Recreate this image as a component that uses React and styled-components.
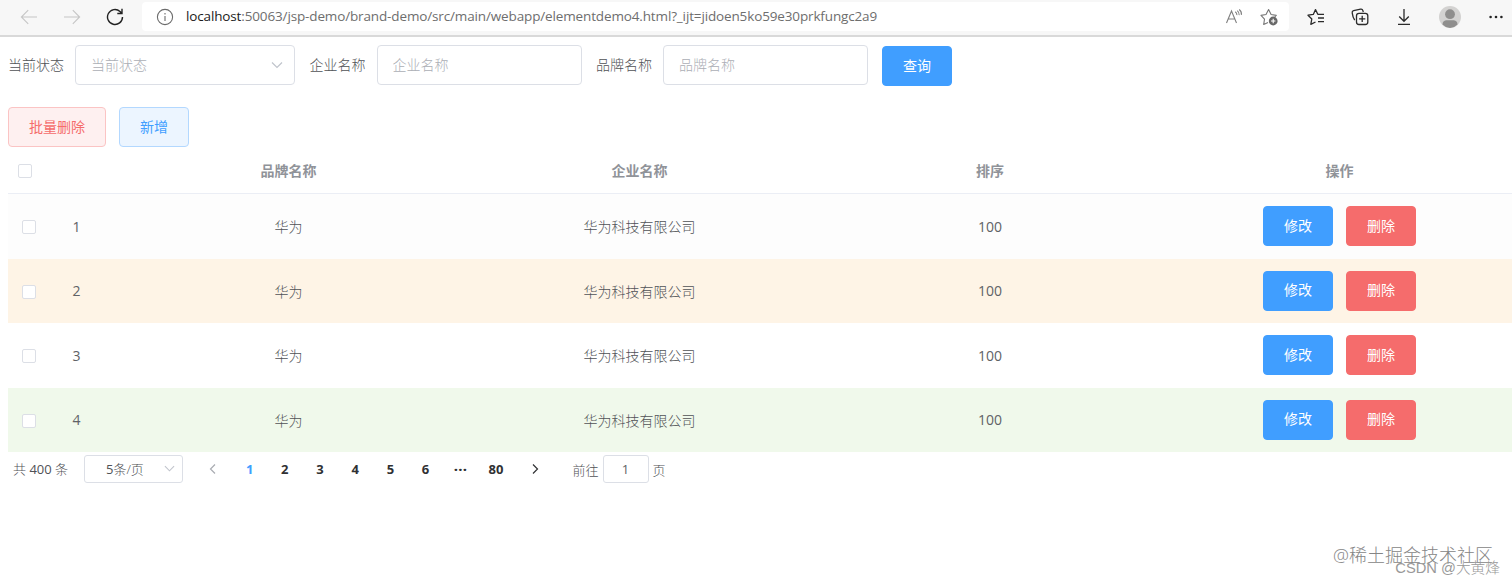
import React, { useState } from 'react'
import styled, { createGlobalStyle } from 'styled-components'

const brands = [
    { id: 1, brandName: '华为', companyName: '华为科技有限公司', ordered: 100, tone: '#fdfdfd' },
    { id: 2, brandName: '华为', companyName: '华为科技有限公司', ordered: 100, tone: '#fef4e6' },
    { id: 3, brandName: '华为', companyName: '华为科技有限公司', ordered: 100, tone: '#fff' },
    { id: 4, brandName: '华为', companyName: '华为科技有限公司', ordered: 100, tone: '#f0f9eb' },
]

const pages = ['1', '2', '3', '4', '5', '6', '···', '80']

const Chevron = ({ d, size = 12, color = '#c0c4cc' }) => (
    <svg width={size} height={size} viewBox="0 0 12 12" fill="none" stroke={color} strokeWidth="1.2">
        <path d={d} />
    </svg>
)

function BrowserBar() {
    return (
        <Browser>
            <NavIcons>
                <svg width="18" height="18" viewBox="0 0 18 18" fill="none" stroke="#c6c6c6" strokeWidth="1.1">
                    <path d="M17 9H1.500M8.200 2.200 1.400 9l6.800 6.800" />
                </svg>
                <svg width="18" height="18" viewBox="0 0 18 18" fill="none" stroke="#c6c6c6" strokeWidth="1.1">
                    <path d="M1 9h15.500M9.800 2.200 16.600 9l-6.800 6.800" />
                </svg>
                <svg width="18" height="18" viewBox="0 0 18 18" fill="none" stroke="#222" strokeWidth="1.4">
                    <path d="M16.500 9A7.500 7.500 0 1 1 14 3.400L15.500 5M16 .8V5.500H11.300" />
                </svg>
            </NavIcons>
            <Address>
                <svg width="18" height="18" viewBox="0 0 18 18" fill="none" stroke="#6b6b6b" strokeWidth="1.1">
                    <circle cx="9" cy="9" r="7.600" />
                    <path d="M9 8v5M9 5v1.500" />
                </svg>
                <Url>
                    <b>localhost</b>:50063/jsp-demo/brand-demo/src/main/webapp/elementdemo4.html?_ijt=jidoen5ko59e30prkfungc2a9
                </Url>
                <svg width="18" height="18" viewBox="0 0 18 18" fill="none" stroke="#808080" strokeWidth="1.1">
                    <path d="M1.500 15 6.500 3l5 12M3.300 11h6.400M10.200 3.700c1.200.8 1.800 2 1.700 3.400M12.200 2.600c1.500 1.100 2.200 2.600 2 4.500M14.200 1.500c1.800 1.400 2.500 3.300 2.200 5.400" />
                </svg>
                <svg width="18" height="18" viewBox="0 0 18 18" fill="none" stroke="#777" strokeWidth="1.1">
                    <path d="M8 14.500 3.700 16.500 4.500 11.200 1 7.400l5-.9L8.600 1.500l2.500 5 5.200.9-1.500 1.400" strokeLinejoin="round" />
                    <circle cx="13.200" cy="13" r="4.400" fill="#686868" stroke="none" />
                    <path d="M13.200 10.800v4.400M11 13h4.400" stroke="#fff" />
                </svg>
            </Address>
            <Tools>
                <svg width="18" height="18" viewBox="0 0 18 18" fill="none" stroke="#2b2b2b" strokeWidth="1.300">
                    <path d="M8.500 14 3.800 16.300 4.800 11 1 7.200l5.300-.8L8.500 1.600l2.300 4.700h6.200M11 10h6M11 13.700h6" strokeLinejoin="round" />
                </svg>
                <svg width="18" height="18" viewBox="0 0 18 18" fill="none" stroke="#2b2b2b" strokeWidth="1.300">
                    <rect x="5.500" y="5.300" width="11.300" height="11.200" rx="2.500" />
                    <path d="M11.200 7.800v6.200M8.100 10.900h6.200M3.700 12.200C2.300 9.900 1.500 7.300 1.200 4.800c-.2-1.100.3-1.900 1.400-2.200l7-1.400c1.100-.2 2 .3 2.300 1.400l.4 1.400" />
                </svg>
                <svg width="18" height="18" viewBox="0 0 18 18" fill="none" stroke="#2b2b2b" strokeWidth="1.300">
                    <path d="M9 1v12M4.200 8.500 9 13.300l4.800-4.800M3 16.400h12" />
                </svg>
                <svg width="22" height="22" viewBox="0 0 22 22">
                    <circle cx="11" cy="11" r="11" fill="#d3d2d1" />
                    <circle cx="11" cy="8.200" r="4.900" fill="#8f8e8d" />
                    <path d="M3.500 18.500c0-3 2.300-4.300 4.300-4.300h6.400c2 0 4.300 1.300 4.300 4.300A11 11 0 0 1 11 22a11 11 0 0 1-7.500-3.500" fill="#8f8e8d" />
                </svg>
                <svg width="16" height="16" viewBox="0 0 16 16" fill="#222">
                    <circle cx="2.600" cy="8" r="1.300" />
                    <circle cx="8" cy="8" r="1.300" />
                    <circle cx="13.400" cy="8" r="1.300" />
                </svg>
            </Tools>
        </Browser>
    )
}

export default function App() {
    const [status] = useState('')
    const [companyName, setCompanyName] = useState('')
    const [brandName, setBrandName] = useState('')
    const [currentPage, setCurrentPage] = useState('1')

    return (
        <Page>
            <GlobalStyle />
            <BrowserBar />
            <SearchForm onSubmit={(e) => e.preventDefault()}>
                <Label>当前状态</Label>
                <Select>
                    {status || '当前状态'}
                    <Chevron d="M1 3.500 6 8.500l5-5" />
                </Select>
                <Label>企业名称</Label>
                <Input placeholder="企业名称" value={companyName} onChange={(e) => setCompanyName(e.target.value)} />
                <Label>品牌名称</Label>
                <Input placeholder="品牌名称" value={brandName} onChange={(e) => setBrandName(e.target.value)} />
                <SearchButton type="submit" $kind="primary">查询</SearchButton>
            </SearchForm>
            <Actions>
                <Button $kind="dangerPlain" $width="98px">批量删除</Button>
                <Button $kind="primaryPlain">新增</Button>
            </Actions>
            <Table>
                <HeadRow>
                    <CheckCell $head><Checkbox /></CheckCell>
                    <span />
                    <Cell>品牌名称</Cell>
                    <Cell>企业名称</Cell>
                    <Cell>排序</Cell>
                    <Cell>操作</Cell>
                </HeadRow>
                {brands.map((brand) => (
                    <Row key={brand.id} $tone={brand.tone}>
                        <CheckCell><Checkbox /></CheckCell>
                        <IndexCell>{brand.id}</IndexCell>
                        <Cell>{brand.brandName}</Cell>
                        <Cell>{brand.companyName}</Cell>
                        <NumberCell>{brand.ordered}</NumberCell>
                        <Cell>
                            <Button $kind="primary">修改</Button>
                            <Button $kind="danger">删除</Button>
                        </Cell>
                    </Row>
                ))}
            </Table>
            <Pagination>
                <Total>共 <b>400</b> 条</Total>
                <PageSize>
                    <span><b>5</b>条/页</span>
                    <Chevron size={11} d="M1 3.500 6 8.500l5-5" />
                </PageSize>
                <Arrow>
                    <Chevron d="M8 1.500 3.500 6 8 10.500" color="#a9acb2" />
                </Arrow>
                {pages.map((page) => (
                    <Pager key={page} $active={page === currentPage} $dots={page === '···'} onClick={() => setCurrentPage(page)}>
                        {page}
                    </Pager>
                ))}
                <Arrow $next>
                    <Chevron d="M4 1.500 8.500 6 4 10.500" color="#303133" />
                </Arrow>
                <Jump>
                    前往
                    <JumpInput defaultValue="1" />
                    页
                </Jump>
            </Pagination>
            <Watermark>@稀土掘金技术社区</Watermark>
            <Credit>CSDN @大黄烽</Credit>
        </Page>
    )
}

const GlobalStyle = createGlobalStyle`
    * {
        box-sizing: border-box;
    }
    body {
        margin: 0;
        background: #fff;
    }
    body, button, input {
        font-family: 'Open Sans', 'Noto Sans CJK SC', sans-serif;
    }
    svg {
        display: block;
        flex: none;
    }
`

const Page = styled.div`
    position: relative;
    height: 584px;
    overflow: hidden;
    color: #505256;
    font-size: 14px;
    font-weight: 300;
`

const Browser = styled.header`
    display: flex;
    height: 37px;
    padding-bottom: 4px;
    background: #f7f7f7;
    border-bottom: 2px solid #d9d9d9;
`

const NavIcons = styled.div`
    display: flex;
    align-items: center;
    gap: 25px;
    width: 142px;
    padding: 2px 0 0 20px;
`

const Address = styled.div`
    display: flex;
    align-items: center;
    width: 1147px;
    margin-top: 2px;
    padding: 0 11px 0 14px;
    background: #fff;
    border-radius: 4px;
    > :nth-child(3) {
        margin: 0 17px 0 auto;
    }
`

const Url = styled.span`
    margin: -2px 0 0 12px;
    color: #6e6e6e;
    font-size: 13.5px;
    font-weight: 400;
    letter-spacing: -0.14px;
    line-height: 20px;
    white-space: nowrap;
    b {
        color: #1b1b1b;
        font-weight: 400;
    }
`

const Tools = styled.div`
    display: flex;
    align-items: center;
    gap: 26px;
    padding: 2px 0 0 18px;
    > :nth-child(4) {
        margin-right: 1px;
    }
`

const SearchForm = styled.form`
    display: flex;
    align-items: center;
    height: 40px;
    margin: 8px 0 0 8px;
`

const Label = styled.label`
    width: 56px;
    margin-right: 11px;
    line-height: 40px;
    white-space: nowrap;
`

const Select = styled.div`
    display: flex;
    align-items: center;
    justify-content: space-between;
    width: 220px;
    height: 40px;
    margin-right: 14.5px;
    padding: 0 11px 2px 15px;
    border: 1px solid #dcdfe6;
    border-radius: 4px;
    color: #abaeb5;
    svg {
        margin-top: 2px;
    }
`

const Input = styled.input`
    width: 205px;
    height: 40px;
    margin-right: 14.5px;
    padding: 0 15px 2px;
    border: 1px solid #dcdfe6;
    border-radius: 4px;
    outline: none;
    font-size: 14px;
    font-weight: 300;
    &::placeholder {
        color: #abaeb5;
    }
`

const kinds = {
    primary: ['#409eff', '#409eff', '#fff'],
    danger: ['#f56c6c', '#f56c6c', '#fff'],
    primaryPlain: ['#ecf5ff', '#b3d8ff', '#409eff'],
    dangerPlain: ['#fef0f0', '#fbc4c4', '#f56c6c'],
}

const Button = styled.button`
    flex: none;
    width: ${({ $width }) => $width || '70px'};
    height: 40px;
    padding: 0 0 3px;
    background: ${({ $kind }) => kinds[$kind][0]};
    border: 1px solid ${({ $kind }) => kinds[$kind][1]};
    border-radius: 4px;
    color: ${({ $kind }) => kinds[$kind][2]};
    font-size: 14px;
    font-weight: 400;
    cursor: pointer;
`

const SearchButton = styled(Button)`
    margin: 2px 0 0 -0.5px;
`

const Actions = styled.div`
    display: flex;
    gap: 13px;
    margin: 22px 0 0 8px;
`

const Table = styled.div`
    width: 1507px;
    margin-left: 8px;
`

const Row = styled.div`
    display: grid;
    grid-template-columns: 54px 51px 351px 351px 350px 349px;
    align-items: center;
    height: 64.5px;
    background: ${({ $tone }) => $tone};
`

const HeadRow = styled(Row)`
    height: 47px;
    padding-bottom: 1px;
    border-bottom: 1px solid #ebeef5;
    color: #909399;
    font-weight: 700;
`

const Cell = styled.div`
    display: flex;
    align-items: center;
    justify-content: center;
    gap: 13px;
`

const NumberCell = styled(Cell)`
    font-weight: 400;
    color: #606266;
`

const IndexCell = styled.div`
    padding-left: 10.5px;
    font-weight: 400;
    color: #606266;
`

const CheckCell = styled.div`
    padding-left: ${({ $head }) => ($head ? '10px' : '14px')};
`

const Checkbox = styled.span`
    display: block;
    width: 14px;
    height: 14px;
    margin-top: 2px;
    background: #fff;
    border: 1px solid #dcdfe6;
    border-radius: 2px;
`

const Pagination = styled.div`
    display: flex;
    align-items: center;
    height: 28px;
    margin-top: 3px;
    padding-left: 13px;
    font-size: 13px;
    b {
        font-weight: 400;
    }
`

const Total = styled.span`
    width: 71px;
    margin-top: -2px;
    white-space: nowrap;
`

const PageSize = styled.div`
    display: flex;
    align-items: center;
    justify-content: space-between;
    width: 99px;
    height: 28px;
    margin-right: 11px;
    padding: 0 7px 2px 21px;
    border: 1px solid #dcdfe6;
    border-radius: 3px;
`

const Arrow = styled.div`
    display: flex;
    justify-content: center;
    width: ${({ $next }) => ($next ? '42px' : '38px')};
    margin-top: -1px;
`

const Pager = styled.div`
    width: 35.2px;
    margin-top: -1px;
    color: ${({ $active }) => ($active ? '#409eff' : '#303133')};
    font-size: 13px;
    font-weight: ${({ $dots }) => ($dots ? 800 : 700)};
    letter-spacing: ${({ $dots }) => ($dots ? '0.7px' : '0')};
    text-align: center;
    cursor: pointer;
`

const Jump = styled.div`
    display: flex;
    align-items: center;
    gap: 4px;
    margin-left: 17px;
`

const JumpInput = styled.input`
    width: 46px;
    height: 28px;
    padding: 0 0 1px;
    border: 1px solid #dcdfe6;
    border-radius: 3px;
    color: #606266;
    font-size: 13px;
    text-align: center;
`

const Watermark = styled.div`
    position: absolute;
    right: 19px;
    bottom: 16px;
    color: #858585;
    font-size: 18px;
    line-height: 26px;
`

const Credit = styled.div`
    position: absolute;
    right: 12px;
    bottom: 6px;
    color: #999;
    font-family: 'Liberation Sans', 'Noto Sans CJK SC', sans-serif;
    font-size: 14.7px;
    line-height: 20px;
`
